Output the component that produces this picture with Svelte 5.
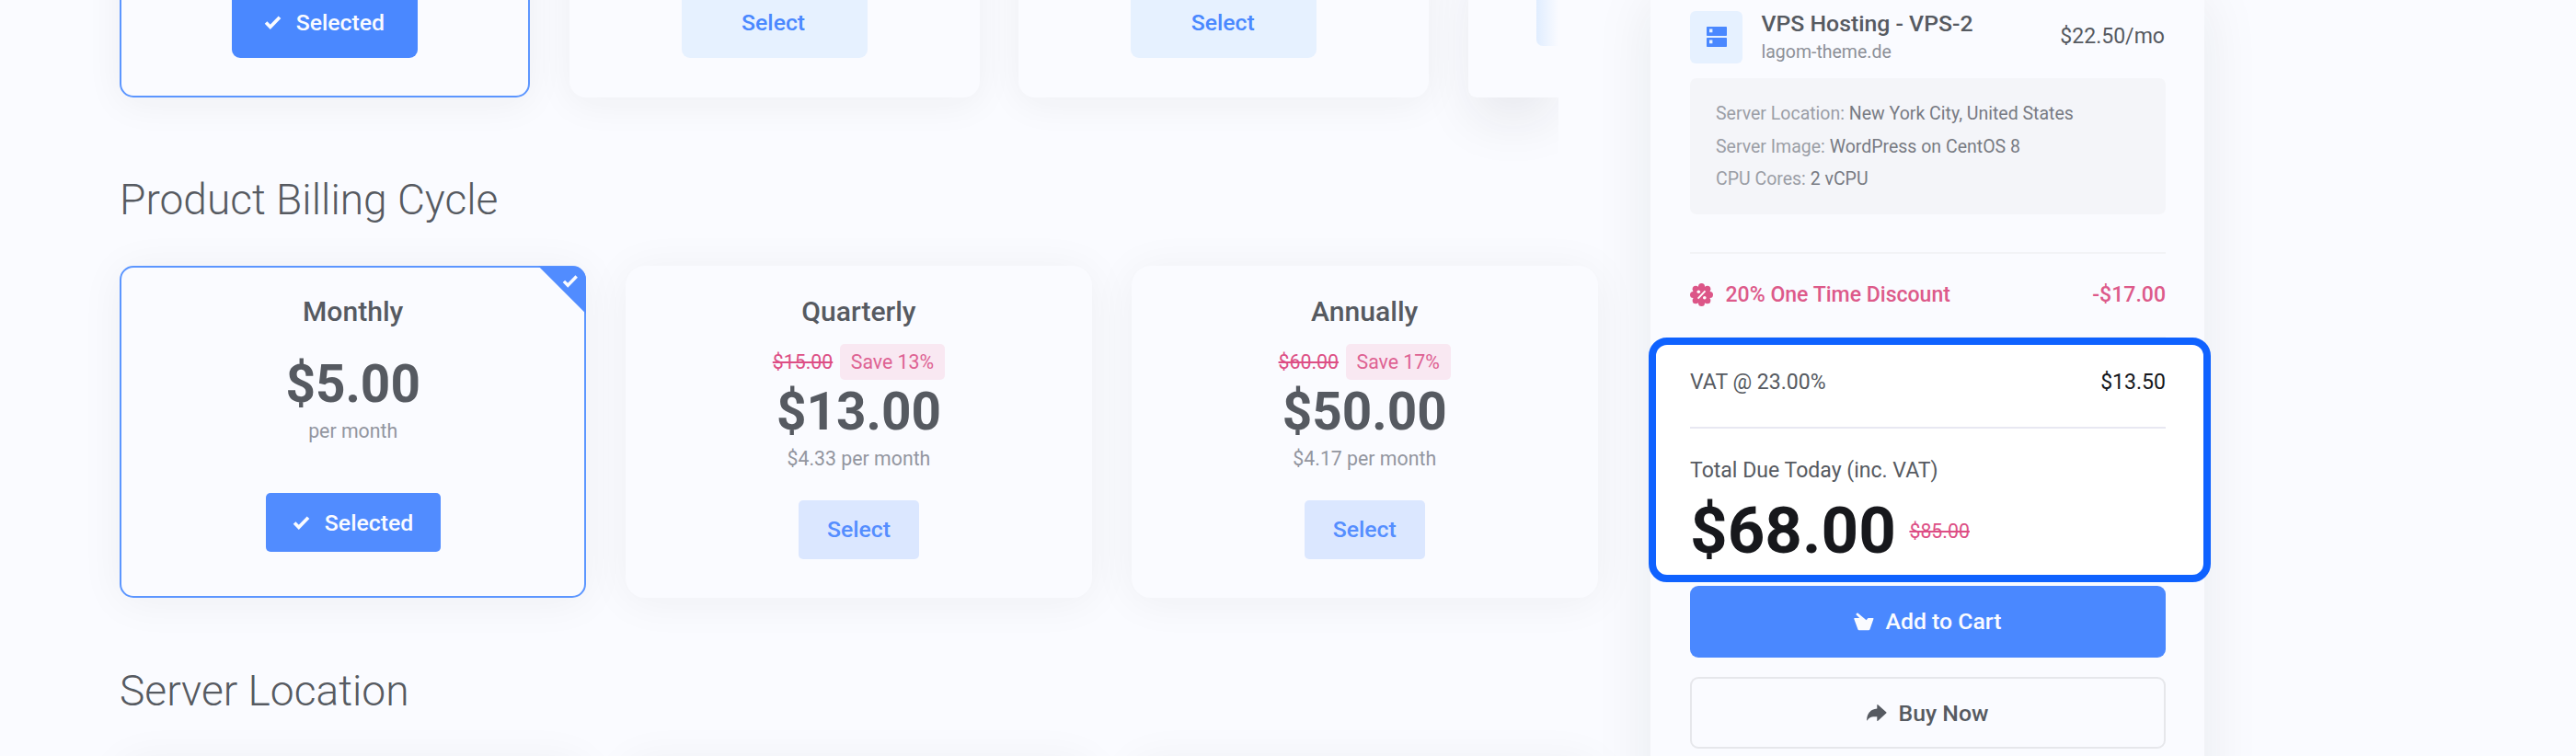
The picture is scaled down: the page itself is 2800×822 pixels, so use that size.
<script>
  const cycles = [
    { name: 'Monthly', price: '$5.00', period: 'per month', selected: true },
    { name: 'Quarterly', price: '$13.00', period: '$4.33 per month', old: '$15.00', save: 'Save 13%' },
    { name: 'Annually', price: '$50.00', period: '$4.17 per month', old: '$60.00', save: 'Save 17%' }
  ];
  const details = [
    ['Server Location:', 'New York City, United States'],
    ['Server Image:', 'WordPress on CentOS 8'],
    ['CPU Cores:', '2 vCPU']
  ];
  const petals = Array.from({ length: 8 }, (_, i) => {
    const a = (i * Math.PI) / 4;
    return [12.5 + 9 * Math.cos(a), 12.5 + 9 * Math.sin(a)];
  });
</script>

{#snippet check(size)}
  <svg class="check" width={size} height={size * 0.84} viewBox="0 0 19 16">
    <path d="M2 8.3 6.6 13 16.6 2.6" fill="none" stroke="currentColor" stroke-width="3.6" />
  </svg>
{/snippet}

<div class="page">
  <main>
    <div class="plans">
      <div class="plan active">
        <button class="btn primary">{@render check(19.5)}Selected</button>
      </div>
      <div class="plan"><button class="btn">Select</button></div>
      <div class="plan"><button class="btn">Select</button></div>
      <div class="plan next"><span class="btn"></span></div>
    </div>

    <h2>Product Billing Cycle</h2>
    <div class="cycles">
      {#each cycles as c}
        <div class="cycle" class:active={c.selected}>
          {#if c.selected}
            <span class="corner">{@render check(18)}</span>
          {/if}
          <h3>{c.name}</h3>
          {#if c.old}
            <div class="saving"><s>{c.old}</s><span class="tag">{c.save}</span></div>
          {/if}
          <div class="price">{c.price}</div>
          <div class="period">{c.period}</div>
          {#if c.selected}
            <button class="pick on">{@render check(19.5)}Selected</button>
          {:else}
            <button class="pick">Select</button>
          {/if}
        </div>
      {/each}
    </div>

    <h2 class="location">Server Location</h2>
    <div class="places">
      <div></div>
      <div></div>
      <div></div>
    </div>
  </main>

  <aside>
    <div class="item">
      <span class="server">
        <svg width="22" height="22" viewBox="0 0 22 22">
          <path fill="#4a88ff" fill-rule="evenodd" d="M.8 0h20.4q.8 0 .8.8v8.4q0 .8-.8.8H.8Q0 10 0 9.200V.8Q0 0 .8 0zM3 2.600v3.600h3.400V2.600z" />
          <path fill="#4a88ff" fill-rule="evenodd" d="M.8 12h20.4q.8 0 .8.8v8.400q0 .8-.8.8H.8q-.8 0-.8-.8v-8.400q0-.8.8-.8zM3 14.600v3.600h3.400v-3.600z" />
        </svg>
      </span>
      <div class="name">
        <div class="product">VPS Hosting - VPS-2</div>
        <div class="domain">lagom-theme.de</div>
      </div>
      <div class="cost">$22.50/mo</div>
    </div>

    <div class="details">
      {#each details as [k, v]}
        <div><span>{k}</span> {v}</div>
      {/each}
    </div>

    <div class="discount">
      <svg width="25" height="25" viewBox="0 0 25 25">
        <g fill="#dc5688">
          <circle cx="12.5" cy="12.5" r="9.500" />
          {#each petals as [x, y]}<circle cx={x} cy={y} r="3.500" />{/each}
        </g>
        <path d="M8.600 16.700 16.500 8.300" stroke="#fff" stroke-width="1.900" />
        <circle cx="9.300" cy="9.300" r="1.800" fill="#fff" />
        <circle cx="15.800" cy="15.700" r="1.800" fill="#fff" />
      </svg>
      <span>20% One Time Discount</span>
      <span class="amount">-$17.00</span>
    </div>

    <div class="total">
      <div class="vat"><span>VAT @ 23.00%</span><b>$13.50</b></div>
      <div class="label">Total Due Today (inc. VAT)</div>
      <div class="due"><strong>$68.00</strong><s>$85.00</s></div>
    </div>

    <button class="action cart">
      <svg width="22" height="20" viewBox="0 0 22 20">
        <path fill="currentColor" d="M2.200 1.900 4 .2l9.600 8.100 1.900-2.400h5.100q1.200 0 .8 1.200l-4 11.400q-.3.800-1.200.8H5.700q-.9 0-1.200-.8L.3 7.100Q0 5.900 1 5.900h5.200z" />
      </svg>
      Add to Cart
    </button>
    <button class="action buy">
      <svg width="22" height="18" viewBox="0 0 22 18">
        <path fill="currentColor" d="M11.300.6q0-.9.9-.3l9 8q.7.600 0 1.300l-9 8.100q-.9.600-.9-.3v-4.200C5.800 12.900 3 13.500.7 17.200q-.6.600-.6-.4C.2 10.200 3.600 5.400 11.300 4.600z" />
      </svg>
      Buy Now
    </button>
  </aside>
</div>

<style>
  :global(body) { background: #fafbff; overflow: hidden; }
  .page {
    display: grid;
    grid-template-columns: 1794px 602px 1fr;
    width: 2800px;
    height: 822px;
    overflow: hidden;
    background: #fafbff;
    color: #565a61;
    font-family: Roboto, sans-serif;
  }
  .page * { box-sizing: border-box; }
  svg { flex: none; display: block; }
  button { font-family: inherit; border: 0; margin: 0; padding: 0; }
  main { padding-left: 130px; height: 822px; min-width: 0; }

  .plans {
    display: grid;
    grid-template-columns: repeat(4, 446px);
    gap: 42.600px;
    width: 1564px;
    height: 105.5px;
    clip-path: inset(0 0 -130px -110px);
  }
  .plan {
    display: flex;
    justify-content: center;
    align-items: flex-end;
    margin-top: -60px;
    padding-bottom: 43px;
    border-radius: 0 0 18px 18px;
    background: #fafbff;
    box-shadow: 0 7px 42px rgba(30, 32, 40, .055);
  }
  .plan.active { border: 2px solid #5c96ff; padding-bottom: 41px; border-radius: 0 0 15px 15px; }
  .btn {
    display: flex;
    align-items: center;
    justify-content: center;
    gap: 15.3px;
    width: 202px;
    height: 77px;
    border-radius: 9px;
    background: #e6f1ff;
    color: #4a88ff;
    font-size: 24.8px;
    font-weight: 500;
  }
  .plan:not(.active) .btn { padding-right: 2px; }
  .btn.primary { background: #4a88ff; color: #fafbff; padding-right: 1px; }
  .plan.next {
    justify-content: flex-start;
    padding: 0 0 56px 74px;
    border-radius: 0 0 0 9px;
    width: 98px;
    box-shadow: 0 28px 60px -6px rgba(30, 32, 40, .09);
  }
  .plan.next .btn { width: 24px; border-radius: 0 0 0 7px; background: linear-gradient(90deg, #e0edff, #fafbff); }

  h2 {
    margin: 81.700px 0 42.300px;
    font-size: 46.100px;
    line-height: 60px;
    font-weight: 300;
  }
  .cycles { display: grid; grid-template-columns: repeat(3, 507.300px); gap: 42.500px; height: 360.500px; }
  .cycle {
    position: relative;
    display: flex;
    flex-direction: column;
    align-items: center;
    padding-top: 29.700px;
    border-radius: 21px;
    background: #fafbff;
    box-shadow: 0 4px 48px rgba(30, 32, 40, .055);
  }
  .cycle.active {
    padding-top: 27.700px;
    border: 2px solid #5c96ff;
    border-radius: 15px;
  }
  .corner {
    position: absolute;
    top: -2px;
    right: -2px;
    display: flex;
    justify-content: flex-end;
    width: 52px;
    height: 52px;
    padding: 9px 8px 0 0;
    border-top-right-radius: 15px;
    background: #518cff;
    clip-path: polygon(0 0, 100% 0, 100% 100%);
    color: #fafbff;
  }
  h3 { margin: 0; font-size: 30.100px; line-height: 40px; font-weight: 500; }
  .price { margin-top: 3px; font-size: 56.700px; line-height: 64px; font-weight: 700; }
  .active .price { margin-top: 27px; }
  .period { margin-top: 4px; font-size: 21.300px; line-height: 30px; color: #93969f; }
  .saving {
    display: flex;
    align-items: center;
    gap: 7.500px;
    height: 39px;
    margin-top: 15.300px;
    font-size: 21.300px;
    color: #dd4f85;
  }
  .tag {
    padding: 0 12px;
    border-radius: 5px;
    line-height: 39px;
    background: #f9e8f2;
    color: #de6292;
  }
  .pick {
    display: flex;
    align-items: center;
    justify-content: center;
    gap: 15.300px;
    width: 131px;
    height: 64px;
    margin-top: 29.300px;
    border-radius: 5px;
    background: #dbe7ff;
    color: #558eff;
    font-size: 24.800px;
    font-weight: 500;
  }
  .pick.on { width: 190px; margin-top: 52px; background: #518cff; color: #fafbff; }
  h2.location { margin-top: 71.500px; }
  .places { display: grid; grid-template-columns: repeat(3, 507.300px); gap: 42.500px; }
  .places div { height: 200px; border-radius: 21px; box-shadow: 0 4px 48px rgba(30, 32, 40, .055); }

  aside {
    height: 900px;
    padding: 12px 42px 0 43px;
    background: #fafbff;
    box-shadow: 0 0 60px rgba(30, 32, 40, .08);
  }
  .item { display: flex; height: 56.500px; }
  .server {
    display: grid;
    place-items: center;
    width: 57px;
    height: 56.500px;
    border-radius: 6px;
    background: #e6f1ff;
  }
  .name { margin: -1px 0 0 20.500px; }
  .product { font-size: 24.800px; line-height: 30px; font-weight: 500; }
  .domain { margin-top: 2px; font-size: 19.500px; line-height: 27px; color: #8d9098; }
  .cost { margin: 12.500px 1px 0 auto; font-size: 23.050px; line-height: 30px; }
  .details {
    height: 148px;
    margin-top: 16px;
    padding: 21.600px 28px;
    border-radius: 7px;
    background: #f4f5f9;
    font-size: 19.500px;
    line-height: 35.500px;
    color: #787b83;
  }
  .details span { color: #9b9ea6; }
  .discount {
    display: flex;
    align-items: center;
    height: 94.500px;
    margin-top: 41px;
    border-top: 2px solid #f2f3f6;
    border-bottom: 2px solid #f2f3f6;
    font-size: 23.050px;
    font-weight: 500;
    color: #dd5a8a;
  }
  .discount span { margin-left: 13.500px; }
  .discount .amount { margin-left: auto; }
  .total {
    height: 266px;
    margin: -1px -49px 0 -45px;
    padding: 26.400px 41px 0 37px;
    border: 8px solid #0f62ff;
    border-radius: 20px;
    background: #fff;
  }
  .vat {
    display: flex;
    justify-content: space-between;
    height: 65px;
    border-bottom: 2px solid #e8e8f2;
    font-size: 23.050px;
    line-height: 30px;
  }
  .vat b { font-weight: 400; color: #15171c; }
  .label { margin-top: 30.700px; font-size: 23.050px; line-height: 30px; }
  .due { display: flex; align-items: center; gap: 14.500px; margin-top: 10px; }
  strong { font-size: 70.900px; line-height: 80px; font-weight: 700; color: #17181c; }
  .due s { font-size: 21.300px; font-weight: 400; color: #dd4f85; }
  .action {
    display: flex;
    align-items: center;
    justify-content: center;
    gap: 13px;
    width: 517px;
    height: 78.500px;
    border-radius: 9px;
    font-size: 24.800px;
    font-weight: 500;
  }
  .cart { margin-top: 3.500px; padding-right: 1px; background: #4a88ff; color: #fafbff; }
  .buy { height: 78px; margin-top: 21px; padding-right: 1px; border: 2px solid #e6e7eb; background: transparent; color: #565a61; }
</style>
